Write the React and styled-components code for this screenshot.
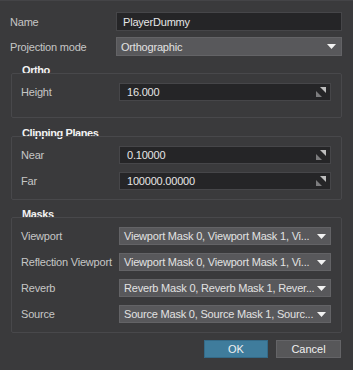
import React from 'react';
import styled, { createGlobalStyle } from 'styled-components';

const GlobalStyle = createGlobalStyle`
  html, body {
    margin: 0;
    padding: 0;
    background: #3a3a3c;
  }
  * { box-sizing: border-box; }
`;

const Dialog = styled.div`
  width: 353px;
  height: 370px;
  background: #3a3a3c;
  border-top: 1px solid #444447;
  padding: 11px 11px 0 10px;
  font-family: "Liberation Sans", Arial, sans-serif;
  font-size: 11px;
  letter-spacing: -0.2px;
  color: #c4c4c4;
  display: flex;
  flex-direction: column;
`;

const Rows = styled.div`
  display: flex;
  flex-direction: column;
  gap: ${(p) => p.gap || 8}px;
`;

const Row = styled.div`
  display: grid;
  grid-template-columns: ${(p) => p.labelWidth}px 1fr;
  align-items: center;
  height: ${(p) => p.h || 18}px;
`;

const Label = styled.span`
  color: #c6c6c6;
  white-space: nowrap;
`;

const TextBox = styled.div`
  position: relative;
  height: 100%;
  background: #252527;
  border: 1px solid #464649;
  color: #e6e6e6;
  padding-left: ${(p) => p.pad || 6}px;
  display: flex;
  align-items: center;
  white-space: nowrap;
  overflow: hidden;
`;

const SelectBox = styled.div`
  height: 100%;
  background: #58585b;
  border: 1px solid #636366;
  color: #e2e2e2;
  padding: 0 ${(p) => p.padRight || 4}px 0 4px;
  display: flex;
  align-items: center;
  justify-content: space-between;
  white-space: nowrap;
  overflow: hidden;
`;

const Spin = styled.svg`
  position: absolute;
  right: 4px;
  top: 50%;
  margin-top: -5px;
`;

const Arrow = styled.svg`
  flex: none;
`;

const Group = styled.div`
  display: flex;
  flex-direction: column;
  margin: ${(p) => p.top}px 0 0 1px;
`;

const GroupTitle = styled.div`
  color: #f2f2f2;
  font-weight: 700;
  letter-spacing: -0.4px;
  line-height: 13px;
  height: 13px;
  padding-left: 11px;
  margin-bottom: -4px;
`;

const GroupBox = styled.div`
  border: 1px solid #48484b;
  border-radius: 2px;
  padding: 9px 10px ${(p) => p.bottom}px 9px;
`;

const Footer = styled.div`
  display: flex;
  justify-content: flex-end;
  gap: 8px;
  margin-top: 7px;
  padding-right: 1px;
`;

const Button = styled.button`
  width: ${(p) => p.w}px;
  height: 18px;
  font-family: inherit;
  font-size: 11px;
  color: #f0f0f0;
  border: 1px solid ${(p) => (p.primary ? '#346a88' : '#646467')};
  background: ${(p) => (p.primary ? '#3f7c9c' : '#575759')};
  padding: 0;
  cursor: pointer;
`;

const SpinIcon = () => (
  <Spin width="10" height="10" viewBox="0 0 10 10">
    <polygon points="4,0 10,0 10,6" fill="#bdbdbd" />
    <polygon points="0,4 0,10 6,10" fill="#7c7c7e" />
  </Spin>
);

const DownArrow = () => (
  <Arrow width="9" height="5" viewBox="0 0 9 5">
    <polygon points="0,0 9,0 4.5,5" fill="#f2f2f2" />
  </Arrow>
);

const NumField = ({ label, value }) => (
  <Row labelWidth={98}>
    <Label>{label}</Label>
    <TextBox pad={7}>
      {value}
      <SpinIcon />
    </TextBox>
  </Row>
);

const MaskField = ({ label, value }) => (
  <Row labelWidth={98}>
    <Label>{label}</Label>
    <SelectBox>
      <span>{value}</span>
      <DownArrow />
    </SelectBox>
  </Row>
);

const masks = [
  ['Viewport', 'Viewport Mask 0, Viewport Mask 1, Vi...'],
  ['Reflection Viewport', 'Viewport Mask 0, Viewport Mask 1, Vi...'],
  ['Reverb', 'Reverb Mask 0, Reverb Mask 1, Rever...'],
  ['Source', 'Source Mask 0, Source Mask 1, Sourc...'],
];

const App = () => (
  <Dialog>
    <GlobalStyle />
    <Rows gap={6}>
      <Row labelWidth={106} h={19}>
        <Label>Name</Label>
        <TextBox>PlayerDummy</TextBox>
      </Row>
      <Row labelWidth={106} h={19}>
        <Label>Projection mode</Label>
        <SelectBox padRight={5}>
          <span>Orthographic</span>
          <DownArrow />
        </SelectBox>
      </Row>
    </Rows>

    <Group top={8}>
      <GroupTitle>Ortho</GroupTitle>
      <GroupBox bottom={16}>
        <NumField label="Height" value="16.000" />
      </GroupBox>
    </Group>

    <Group top={9}>
      <GroupTitle>Clipping Planes</GroupTitle>
      <GroupBox bottom={9}>
        <Rows>
          <NumField label="Near" value="0.10000" />
          <NumField label="Far" value="100000.00000" />
        </Rows>
      </GroupBox>
    </Group>

    <Group top={8}>
      <GroupTitle>Masks</GroupTitle>
      <GroupBox bottom={9}>
        <Rows>
          {masks.map(([l, v]) => (
            <MaskField key={l} label={l} value={v} />
          ))}
        </Rows>
      </GroupBox>
    </Group>

    <Footer>
      <Button primary w={64}>OK</Button>
      <Button w={65}>Cancel</Button>
    </Footer>
  </Dialog>
);

export default App;
